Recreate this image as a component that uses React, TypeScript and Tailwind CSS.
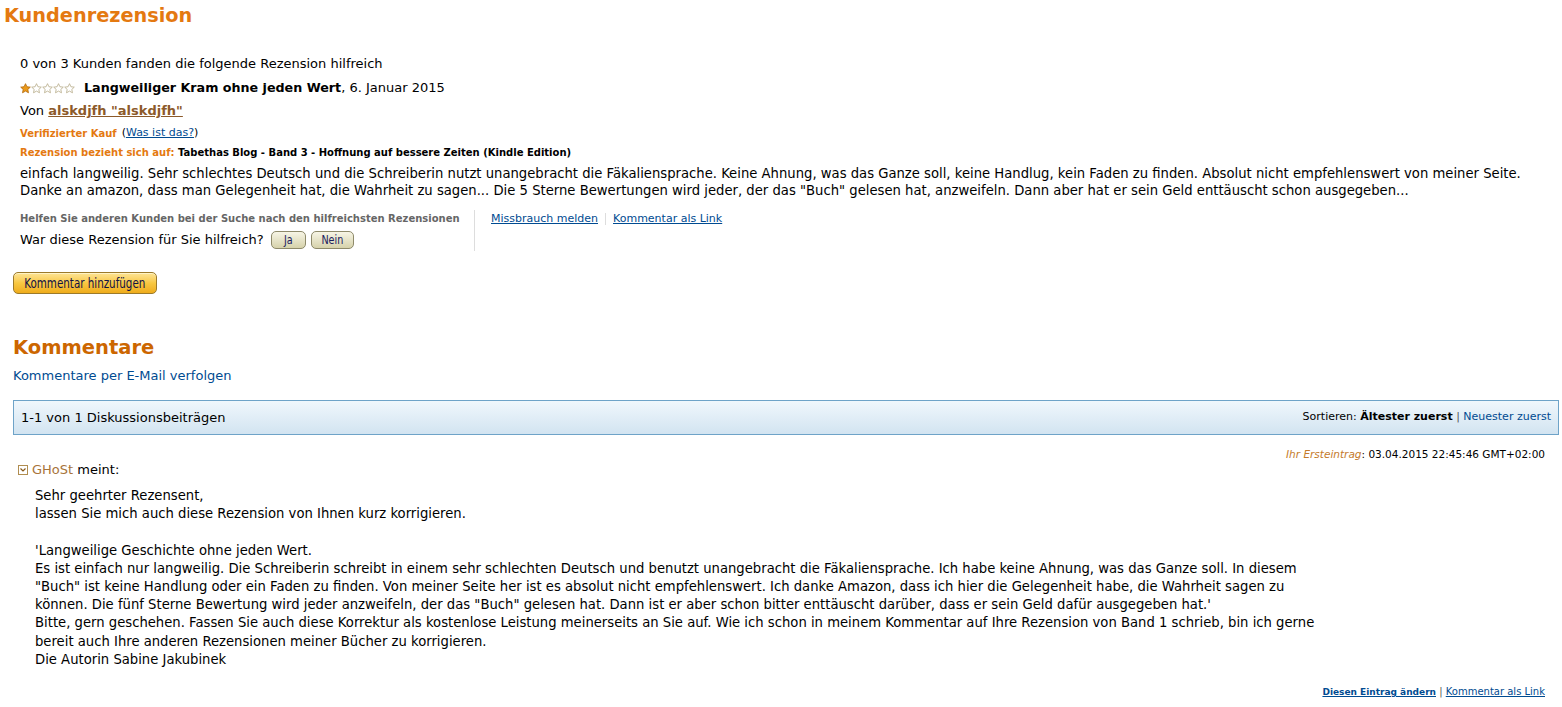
import React from "react";

const font = "font-['Verdana','DejaVu_Sans',sans-serif]";

function Star({ filled }: { filled: boolean }) {
  return (
    <svg width="11" height="11" viewBox="0 0 20 20" className="inline-block">
      <path
        d="M10 1.2l2.6 5.6 6.1.7-4.5 4.2 1.2 6.1-5.4-3.1-5.4 3.1 1.2-6.1-4.5-4.2 6.1-.7z"
        fill={filled ? "#eb9a1a" : "#ffffff"}
        stroke={filled ? "#b56a08" : "#b9ae8c"}
        strokeWidth="1.5"
        strokeLinejoin="round"
      />
    </svg>
  );
}

function SmallButton({ label, w }: { label: string; w: string }) {
  return (
    <button
      className={`${w} h-[18px] rounded-[5px] border border-[#8e8a6a] bg-gradient-to-b from-[#f7f5e6] to-[#d6d2ab] flex items-center justify-center`}
    >
      <span className="inline-block scale-x-[0.82] text-[13px] leading-[16px] text-[#1b1b5e] font-['Liberation_Sans_Narrow','DejaVu_Sans_Condensed','Liberation_Sans',sans-serif]">
        {label}
      </span>
    </button>
  );
}

export default function App() {
  return (
    <div className={`${font} bg-white text-black w-[1562px] h-[707px] overflow-hidden`}>
      {/* Kundenrezension */}
      <h1 className="pl-[4px] pt-[4px] h-[28px] leading-[24px] text-[19.3px] font-bold text-[#e47911]">
        Kundenrezension
      </h1>

      <div className="pl-[20px] pr-[12px] mt-[24px]">
        <div className="h-[24px] leading-[24px] text-[13px]">
          0 von 3 Kunden fanden die folgende Rezension hilfreich
        </div>
        <div className="h-[24px] flex items-center text-[13px]">
          <span className="flex mr-[9px]">
            <Star filled />
            <Star filled={false} />
            <Star filled={false} />
            <Star filled={false} />
            <Star filled={false} />
          </span>
          <b className="text-[12.7px]">Langweiliger Kram ohne jeden Wert</b>, 6. Januar 2015
        </div>
        <div className="h-[22px] flex items-center text-[13px]">
          Von&nbsp;
          <a className="font-bold underline text-[#8c5a2a]">alskdjfh "alskdjfh"</a>
        </div>
        <div className="h-[22px] flex items-center text-[11px]">
          <span className="font-bold text-[10px] text-[#e47911]">Verifizierter Kauf</span>
          <span className="ml-[5px]">
            (<a className="underline text-[#004b91]">Was ist das?</a>)
          </span>
        </div>
        <div className="h-[17px] flex items-center text-[10px] font-bold">
          <span className="text-[#e47911]">Rezension bezieht sich auf:</span>
          &nbsp;Tabethas Blog - Band 3 - Hoffnung auf bessere Zeiten (Kindle Edition)
        </div>
        <p className="mt-[4px] text-[13.2px] leading-[17px] whitespace-nowrap">
          einfach langweilig. Sehr schlechtes Deutsch und die Schreiberin nutzt unangebracht die Fäkaliensprache. Keine Ahnung, was das Ganze soll, keine Handlug, kein Faden zu finden. Absolut nicht empfehlenswert von meiner Seite.
          <br />
          Danke an amazon, dass man Gelegenheit hat, die Wahrheit zu sagen... Die 5 Sterne Bewertungen wird jeder, der das "Buch" gelesen hat, anzweifeln. Dann aber hat er sein Geld enttäuscht schon ausgegeben...
        </p>

        <div className="mt-[11px] flex">
          <div className="w-[455px] border-r border-[#dddddd]">
            <div className="h-[18px] leading-[18px] text-[10px] font-bold text-[#666666] whitespace-nowrap">
              Helfen Sie anderen Kunden bei der Suche nach den hilfreichsten Rezensionen
            </div>
            <div className="mt-[1px] h-[22px] flex items-center gap-[5px] text-[13px]">
              <span className="mr-[2px]">War diese Rezension für Sie hilfreich?</span>
              <SmallButton label="Ja" w="w-[35px]" />
              <SmallButton label="Nein" w="w-[43px]" />
            </div>
          </div>
          <div className="pl-[16px] h-[18px] flex items-center text-[11px] text-[#004b91]">
            <a className="underline">Missbrauch melden</a>
            <span className="mx-[7px] h-[12px] border-l border-[#dddddd]" />
            <a className="underline">Kommentar als Link</a>
          </div>
        </div>
      </div>

      <div className="pl-[13px] pr-[3px]">
        <button className="mt-[21px] w-[144px] h-[22px] rounded-[5px] border border-[#9c7a2a] bg-gradient-to-b from-[#fde493] via-[#f8c841] to-[#efac1a] flex items-center justify-center shadow-[inset_0_1px_0_#fff3c4]">
          <span className="inline-block scale-x-[0.82] whitespace-nowrap text-[14px] leading-[18px] text-[#111144] font-['Liberation_Sans_Narrow','DejaVu_Sans_Condensed','Liberation_Sans',sans-serif]">
            Kommentar hinzufügen
          </span>
        </button>

        {/* Kommentare */}
        <h2 className="mt-[42px] h-[24px] leading-[24px] text-[19.5px] font-bold text-[#cc6600]">
          Kommentare
        </h2>
        <div className="mt-[7px] h-[17px] leading-[17px] text-[13px] text-[#004b91]">
          Kommentare per E-Mail verfolgen
        </div>

        <div className="mt-[16px] h-[35px] border border-[#6ea3c8] bg-gradient-to-b from-[#f0f7fc] to-[#d2e4f1] flex items-center justify-between pl-[7px] pr-[7px]">
          <span className="text-[13px]">1-1 von 1 Diskussionsbeiträgen</span>
          <span className="text-[11px]">
            Sortieren: <b>Ältester zuerst</b>
            <span className="text-[#555]"> | </span>
            <a className="text-[#004b91]">Neuester zuerst</a>
          </span>
        </div>

        <div className="mt-[11px] pr-[14px] h-[16px] leading-[16px] text-right text-[10.5px]">
          <i className="text-[#c47a2a]">Ihr Ersteintrag</i>: 03.04.2015 22:45:46 GMT+02:00
        </div>

        <div className="pl-[5px] h-[15px] flex items-center text-[13px]">
          <span className="w-[10px] h-[10px] border border-[#b08d50] flex items-center justify-center mr-[4px]">
            <svg width="8" height="8" viewBox="0 0 8 8">
              <path d="M1.5 2.5L4 5l2.5-2.5" fill="none" stroke="#8a5a1a" strokeWidth="1.2" />
            </svg>
          </span>
          <span className="text-[#a8743a]">GHoSt</span>&nbsp;meint:
        </div>

        <div className="mt-[10px] pl-[22px] text-[13.2px] leading-[18.2px] whitespace-nowrap">
          Sehr geehrter Rezensent,
          <br />
          lassen Sie mich auch diese Rezension von Ihnen kurz korrigieren.
          <br />
          <br />
          'Langweilige Geschichte ohne jeden Wert.
          <br />
          Es ist einfach nur langweilig. Die Schreiberin schreibt in einem sehr schlechten Deutsch und benutzt unangebracht die Fäkaliensprache. Ich habe keine Ahnung, was das Ganze soll. In diesem
          <br />
          "Buch" ist keine Handlung oder ein Faden zu finden. Von meiner Seite her ist es absolut nicht empfehlenswert. Ich danke Amazon, dass ich hier die Gelegenheit habe, die Wahrheit sagen zu
          <br />
          können. Die fünf Sterne Bewertung wird jeder anzweifeln, der das "Buch" gelesen hat. Dann ist er aber schon bitter enttäuscht darüber, dass er sein Geld dafür ausgegeben hat.'
          <br />
          Bitte, gern geschehen. Fassen Sie auch diese Korrektur als kostenlose Leistung meinerseits an Sie auf. Wie ich schon in meinem Kommentar auf Ihre Rezension von Band 1 schrieb, bin ich gerne
          <br />
          bereit auch Ihre anderen Rezensionen meiner Bücher zu korrigieren.
          <br />
          Die Autorin Sabine Jakubinek
        </div>

        <div className="mt-[15px] pr-[14px] h-[16px] leading-[16px] text-right text-[10px] text-[#004b91]">
          <a className="font-bold text-[9px] underline">Diesen Eintrag ändern</a>
          <span className="text-[#555]"> | </span>
          <a className="underline">Kommentar als Link</a>
        </div>
      </div>
    </div>
  );
}
